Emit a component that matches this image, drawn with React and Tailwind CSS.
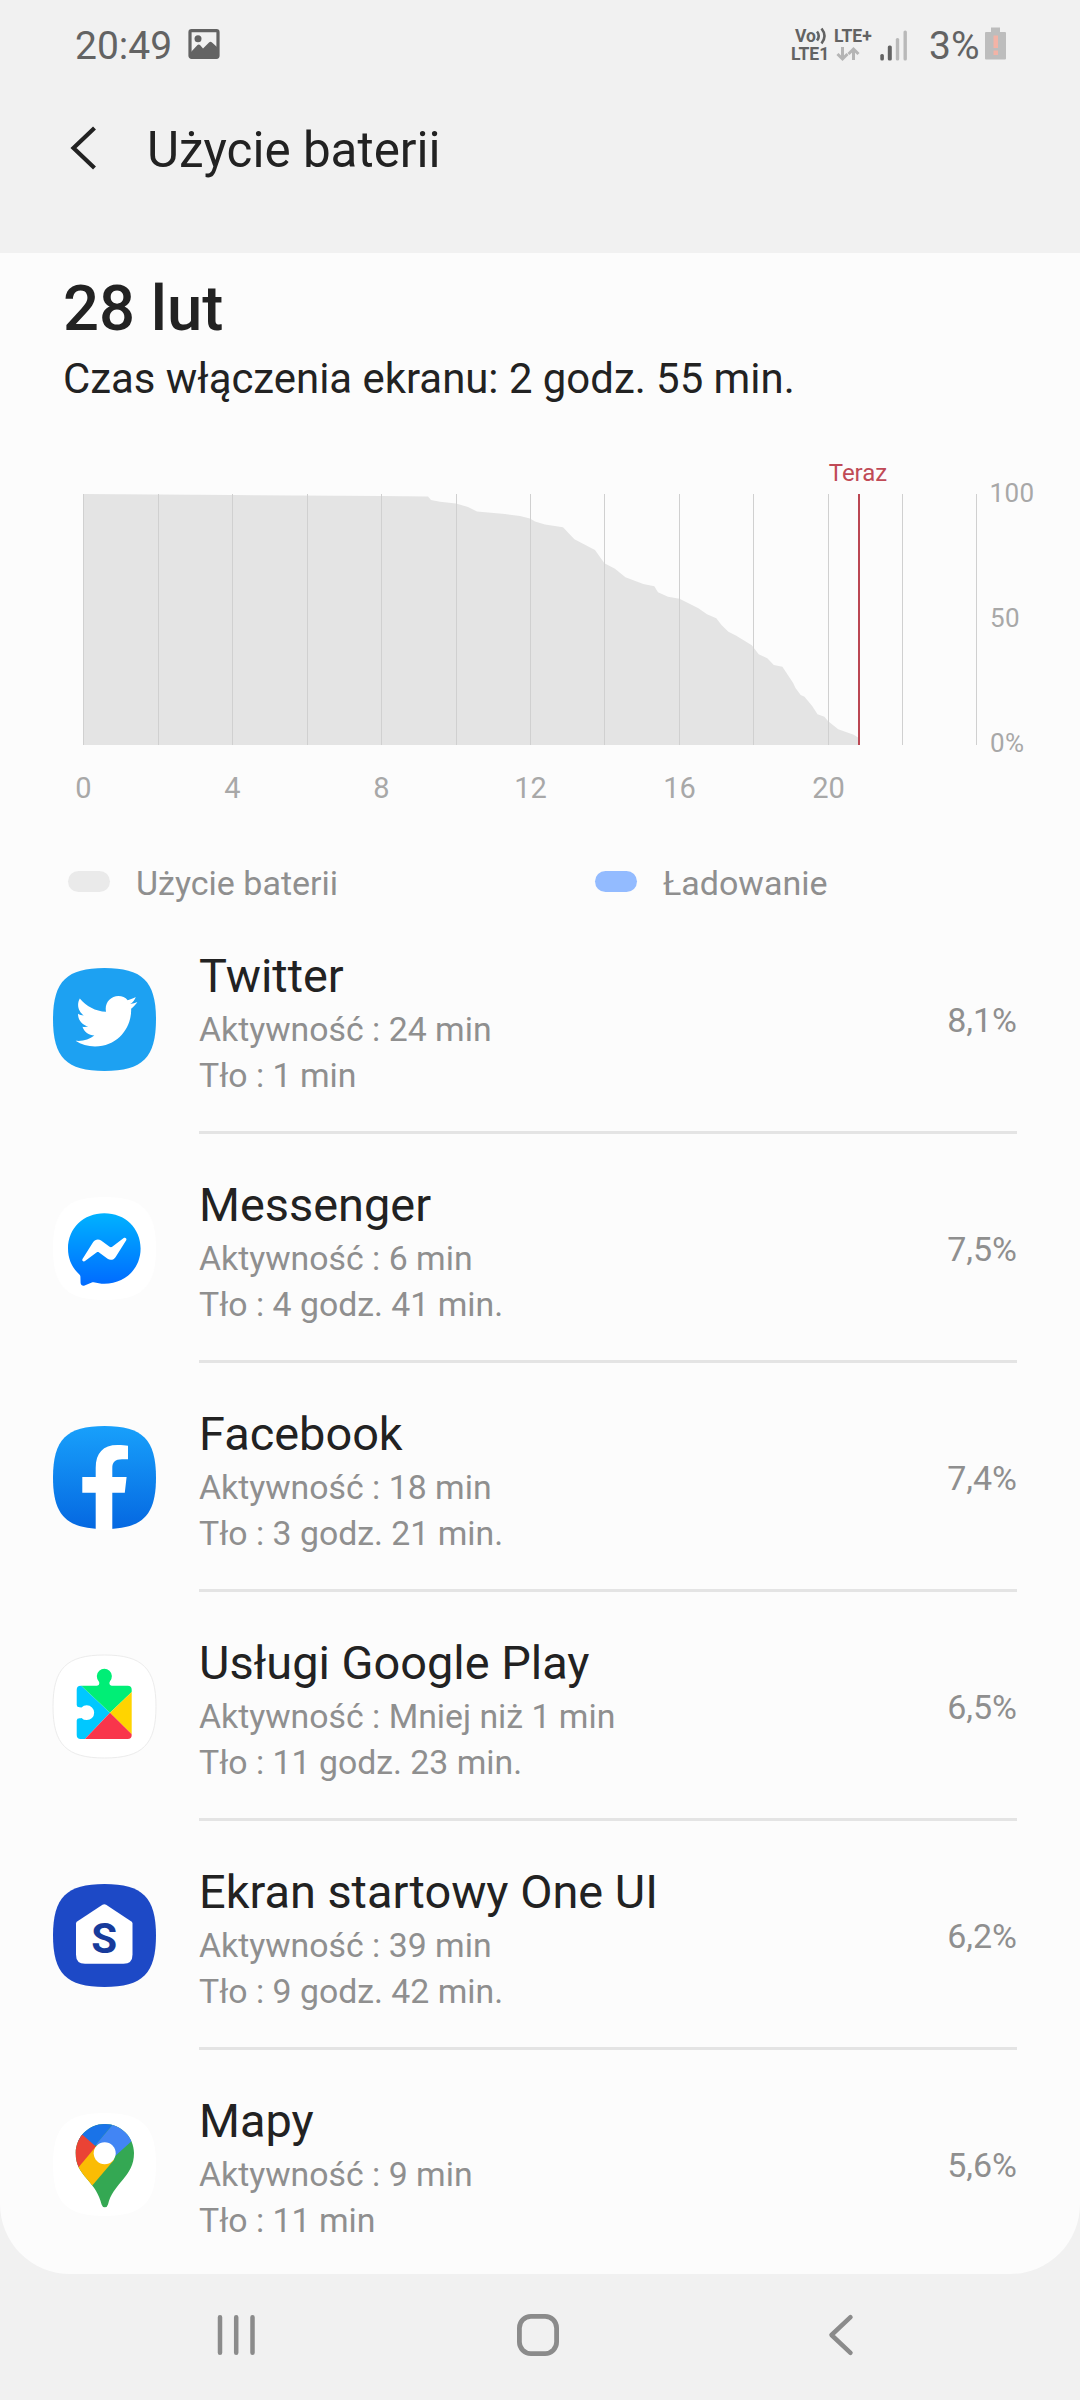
import { FaTwitter } from "react-icons/fa";

const SQUIRCLE = "M51.5 0C89.5 0 103 13.5 103 51.5S89.5 103 51.5 103 0 89.5 0 51.5 13.5 0 51.5 0Z";

function AppIcon({ fill, stroke, children }) {
    return (
        <svg className="w-[103px] h-[103px] overflow-visible" viewBox="0 0 103 103">
            <path d={SQUIRCLE} fill={fill} stroke={stroke} />
            {children}
        </svg>
    );
}

function TwitterIcon() {
    return (
        <AppIcon fill="#1da1f2">
            <FaTwitter x="22.5" y="22.3" size={62} color="#fff" />
        </AppIcon>
    );
}

function MessengerIcon() {
    return (
        <AppIcon fill="#fff">
            <defs>
                <linearGradient id="msg" x1="0" y1="0" x2="0" y2="1">
                    <stop offset="0" stopColor="#00b2ff" />
                    <stop offset="1" stopColor="#006aff" />
                </linearGradient>
            </defs>
            <path
                d="M51.3 16.3C30.5 16.3 15 31.3 15 51.5C15 62 19.3 71.2 26.4 77.5C27 78.1 27.4 78.8 27.4 79.6L27.6 86.1C27.7 88.1 29.7 89.4 31.6 88.6L38.8 85.4C39.4 85.1 40.1 85.1 40.7 85.2C44 86.1 47.6 86.7 51.3 86.7C72.2 86.7 87.6 71.6 87.6 51.5S72.2 16.3 51.3 16.3Z"
                fill="url(#msg)"
            />
            <path
                d="M29.5 61.9L40.2 45C41.9 42.3 45.5 41.6 48.1 43.5L56.6 49.8C57.4 50.4 58.5 50.4 59.2 49.8L70.7 41.1C72.2 39.9 74.2 41.7 73.2 43.3L62.5 60.2C60.8 62.9 57.2 63.6 54.6 61.7L46.1 55.4C45.3 54.8 44.3 54.8 43.5 55.4L32 64.1C30.5 65.3 28.5 63.5 29.5 61.9Z"
                fill="#fff"
            />
        </AppIcon>
    );
}

function FacebookIcon() {
    return (
        <AppIcon fill="url(#fb)">
            <defs>
                <linearGradient id="fb" x1="0" y1="0" x2="0" y2="1">
                    <stop offset="0" stopColor="#18a0fb" />
                    <stop offset="1" stopColor="#0568e1" />
                </linearGradient>
            </defs>
            <path
                d="M42.7 104V66.7H29.3V51H42.7V42C42.7 27 50 19 64.5 19C69 19 72.5 19.2 75 19.7V33.2H69C62 33.2 59.3 36.5 59.3 42V51H73.6L71.8 66.7H59.3V104Z"
                fill="#fff"
            />
        </AppIcon>
    );
}

function PlayServicesIcon() {
    return (
        <AppIcon fill="#fff" stroke="#ececec">
            <defs>
                <clipPath id="puzzle">
                    <path d="M27.7 30.7H44Q46.5 30.5 46.3 28Q46.2 27 45.5 26A7.5 7.5 0 1 1 57.2 26Q56.5 27 56.4 28Q56.2 30.5 58.7 30.7H74.7Q78.7 30.7 78.7 34.7V80Q78.7 84 74.7 84H27.7Q23.7 84 23.7 80V65.5Q23.8 63.3 26.5 63.2Q28 63.2 28.5 62.9A7.4 7.4 0 1 0 28.5 52.5Q28 52.3 26.5 52.3Q23.8 52.2 23.7 50V34.7Q23.7 30.7 27.7 30.7Z" />
                </clipPath>
            </defs>
            <g clipPath="url(#puzzle)">
                <path d="M20 23L57 57.7L30 86H20Z" fill="#00c8ff" />
                <path d="M28 30.5V10H80V35.7L57 57.7Z" fill="#00ee76" />
                <path d="M80 35.7V80.5L57 57.7Z" fill="#ffd400" />
                <path d="M57 57.7L80 80.5V86H30Z" fill="#f9354b" />
            </g>
        </AppIcon>
    );
}

function OneUiIcon() {
    return (
        <AppIcon fill="#1d49c6">
            <path
                d="M49.5 20.8Q51.3 19.7 53.1 20.8L78 37.2Q79.5 38.2 79.5 39.5V70.7Q79.5 79.7 70.5 79.7H32Q23 79.7 23 70.7V39.5Q23 38.2 24.5 37.2Z"
                fill="#fff"
            />
            <text x="51.3" y="68.8" textAnchor="middle" fontSize="42" fontWeight="700" fill="#173b9b">S</text>
        </AppIcon>
    );
}

function MapsIcon() {
    return (
        <AppIcon fill="#fff">
            <defs>
                <clipPath id="pin">
                    <path d="M51.8 11C68 11 81 24 81 40C81 52 76 59 70 66.5C63 75 57.5 81 55 91.5Q54.2 94.3 51.8 94.3T48.6 91.5C46 81 41 74 34 66C27 57.5 22.7 52 22.7 40C22.7 24 35.6 11 51.8 11Z" />
                </clipPath>
            </defs>
            <g clipPath="url(#pin)">
                <path d="M0 0H103V103H0Z" fill="#34a853" />
                <path d="M25 5H65L36 40L25 30Z" fill="#1a73e8" />
                <path d="M61.5 9.5L90 0V18L60 45L43 31.5Z" fill="#4285f4" />
                <path d="M15 10L30.3 22.5L44 34.5L26 55.5H10Z" fill="#ea4335" />
                <path d="M42.5 34L52 40L61 47L38 74L20 61Z" fill="#fbbc04" />
            </g>
            <circle cx="51.7" cy="40.3" r="11" fill="#fff" />
        </AppIcon>
    );
}

const apps = [
    { name: "Twitter", active: "24 min", background: "1 min", percent: "8,1%", Icon: TwitterIcon },
    { name: "Messenger", active: "6 min", background: "4 godz. 41 min.", percent: "7,5%", Icon: MessengerIcon },
    { name: "Facebook", active: "18 min", background: "3 godz. 21 min.", percent: "7,4%", Icon: FacebookIcon },
    { name: "Usługi Google Play", active: "Mniej niż 1 min", background: "11 godz. 23 min.", percent: "6,5%", Icon: PlayServicesIcon },
    { name: "Ekran startowy One UI", active: "39 min", background: "9 godz. 42 min.", percent: "6,2%", Icon: OneUiIcon },
    { name: "Mapy", active: "9 min", background: "11 min", percent: "5,6%", Icon: MapsIcon },
];

function StatusBar() {
    return (
        <div className="h-[92px] flex items-center pl-[75px] pr-[74px] text-[#636363]">
            <span className="w-[113px] text-[39px] leading-[46px]">20:49</span>
            <svg className="w-[32px] h-[30px] -mt-[4px]" viewBox="0 0 32 30">
                <rect x="2" y="1.7" width="28" height="26.6" rx="1.5" fill="none" stroke="#636363" strokeWidth="3.2" />
                <circle cx="10" cy="9.8" r="3.5" fill="#636363" />
                <path d="M3 23L9.5 16Q11 15 12.5 16.5L15 19.5L21 13.5Q22.5 12 24 13.5L29 18V28H3Z" fill="#636363" />
            </svg>

            <div className="ml-auto flex items-center">
                <div className="w-[89px] -mt-[2px] text-[17.5px] leading-[18px] font-bold">
                    <div className="flex items-center pl-[4px]">
                        <span>Vo</span>
                        <svg className="w-[12px] h-[18px]" viewBox="0 0 12 18" fill="none" stroke="#636363" strokeWidth="2.6">
                            <path d="M1 4.5Q4.5 9 1 13.5M5.5 1.5Q11.5 9 5.5 16.5" />
                        </svg>
                        <span className="ml-[6px]">LTE+</span>
                    </div>
                    <div className="flex items-center">
                        <span>LTE1</span>
                        <svg className="ml-[7px] w-[24px] h-[16px]" viewBox="0 0 24 16" fill="none" stroke="#b5b5b5" strokeWidth="3">
                            <path d="M6.5 1V13M1.5 8L6.5 13L11.5 8M17.5 14V3M12.5 8L17.5 3L22.5 8" />
                        </svg>
                    </div>
                </div>
                <svg className="w-[28px] h-[31px] -mt-[2px]" viewBox="0 0 28 31">
                    <rect x="0.3" y="24" width="3.6" height="6.5" rx="1.6" fill="#636363" />
                    <rect x="7.8" y="15.5" width="4" height="15" rx="1.6" fill="#636363" />
                    <rect x="15.8" y="8" width="3.4" height="22.5" rx="1.6" fill="#b9b9b9" />
                    <rect x="23.5" y="0.5" width="3.4" height="30" rx="1.6" fill="#b9b9b9" />
                </svg>
                <span className="ml-[21px] w-[56px] text-[39px] leading-[46px]">3%</span>
                <svg className="w-[21px] h-[33px] -mt-[5px]" viewBox="0 0 21 33">
                    <path d="M6 0.5H15V5H20Q21 5 21 6V31.5Q21 32.5 20 32.5H1Q0 32.5 0 31.5V6Q0 5 1 5H6Z" fill="#bdbdbd" />
                    <path d="M8.5 8.5H13V21H8.5ZM8.5 23.5H13V28H8.5Z" fill="#f3b3a6" />
                </svg>
            </div>
        </div>
    );
}

const level = [
    [83, 494], [232, 495], [381, 496], [428, 496.5], [431, 500], [440, 501.8], [456, 503.5], [468, 507], [477, 511.5],
    [505, 514], [520, 516], [530, 518.5], [535, 521.5], [545, 524.5], [563, 527.3], [574.4, 539.3], [595, 550],
    [604.4, 563.3], [615, 568.7], [625.4, 577.3], [643.3, 584], [654.3, 586.3], [658, 592.3], [668, 596.7],
    [679.5, 598.7], [698.4, 608.3], [707, 614.3], [716.3, 618.3], [721.5, 625], [728.4, 631.7], [736.3, 635.7],
    [751.8, 645.3], [758.7, 654.3], [767.3, 658.3], [773.8, 665], [782.4, 666.7], [793, 682.7], [795.5, 688],
    [800.7, 695], [804.5, 696.7], [812, 705.7], [817.5, 714.3], [824.4, 716.7], [828.2, 721.3], [838.2, 729.3],
    [853.7, 734.7], [858.9, 738],
];
const gridX = [83, 158, 232, 307, 381, 456, 530, 604, 679, 753, 828, 902, 976];

function BatteryChart() {
    return (
        <svg className="block shrink-0 w-full h-[457px]" viewBox="0 404 1080 457">
            <path d={`M83 745L${level.map((p) => p.join(" ")).join("L")}V745Z`} fill="#e4e4e4" />
            {gridX.map((x) => (
                <rect key={x} x={x} y="494" width="1" height="251" fill="#d0d0d0" />
            ))}
            <rect x="858" y="494" width="2" height="251" fill="#bb4753" />
            <text x="858" y="481" textAnchor="middle" fontSize="24" fill="#c04a56">Teraz</text>
            <g fontSize="26" fill="#a8a8a8" letterSpacing="0.4">
                <text x="989.5" y="501.5">100</text>
                <text x="990" y="626.5">50</text>
                <text x="990" y="751.5">0%</text>
            </g>
            <g fontSize="29" fill="#a8a8a8" textAnchor="middle">
                {[0, 4, 8, 12, 16, 20].map((h) => (
                    <text key={h} x={gridX[h / 2] + 0.5} y="798">{h}</text>
                ))}
            </g>
        </svg>
    );
}

function AppRow({ app, last }) {
    const { Icon } = app;
    return (
        <div className="h-[229px] shrink-0 flex pl-[53px] pr-[63px]">
            <div className="w-[146px] pt-[63px]">
                <Icon />
            </div>
            <div className={`flex-1 flex justify-between pt-[42px] ${last ? "" : "border-b-[3px] border-[#e4e4e4]"}`}>
                <div>
                    <div className="mb-[3px] text-[46.9px] leading-[57px] text-[#222222]">{app.name}</div>
                    <div className="text-[33.8px] leading-[46px] text-[#8f8f8f]">
                        <p>Aktywność : {app.active}</p>
                        <p>Tło : {app.background}</p>
                    </div>
                </div>
                <span className="pt-[50px] text-[34px] leading-[46px] text-[#8f8f8f]">{app.percent}</span>
            </div>
        </div>
    );
}

export default function App() {
    return (
        <div className="w-[1080px] h-[2400px] flex flex-col overflow-hidden bg-[#f1f1f1] font-['Roboto',sans-serif]">
            <StatusBar />

            <header className="h-[161px] flex items-start pl-[70px] pt-[28px]">
                <svg className="w-[30px] h-[56px]" viewBox="0 0 30 56">
                    <path d="M24.5 8L3.5 28L24.5 48" fill="none" stroke="#222" strokeWidth="4.2" />
                </svg>
                <h1 className="ml-[47px] text-[49.4px] leading-[60px] text-[#222222]">Użycie baterii</h1>
            </header>

            <main className="h-[2021px] flex flex-col overflow-hidden rounded-b-[70px] bg-[#fcfcfc]">
                <div className="shrink-0 px-[63px] pt-[18px] h-[151px] text-[#222222]">
                    <h2 className="text-[63.4px] leading-[75px] font-medium">28 lut</h2>
                    <p className="mt-[8px] text-[41.9px] leading-[50px]">Czas włączenia ekranu: 2 godz. 55 min.</p>
                </div>

                <BatteryChart />

                <div className="shrink-0 h-[44px] grid grid-cols-[527px_1fr] pl-[68px] text-[34px] leading-[44px] text-[#8f8f8f]">
                    <div className="flex items-center">
                        <i className="w-[42px] h-[21px] -mt-[3px] mr-[26px] rounded-full bg-[#eaeaea]" />
                        Użycie baterii
                    </div>
                    <div className="flex items-center">
                        <i className="w-[42px] h-[21px] -mt-[3px] mr-[26px] rounded-full bg-[#93bbff]" />
                        Ładowanie
                    </div>
                </div>

                {apps.map((app, i) => (
                    <AppRow key={app.name} app={app} last={i === apps.length - 1} />
                ))}
            </main>

            {/* Navigation bar */}
            <nav className="h-[122px] flex items-center px-[217px]">
                <svg className="w-[39px] h-[42px]" viewBox="0 0 39 42" stroke="#8b8b8b" strokeWidth="4.5" strokeLinecap="round">
                    <path d="M3 3.2V38.8M19.2 3.2V38.8M35.5 3.2V38.8" />
                </svg>
                <svg className="ml-[261px] w-[42px] h-[42px]" viewBox="0 0 42 42">
                    <rect x="2.4" y="2.4" width="37.2" height="37.2" rx="11.5" fill="none" stroke="#8b8b8b" strokeWidth="4.8" />
                </svg>
                <svg className="ml-[269px] w-[26px] h-[42px]" viewBox="0 0 26 42" fill="none" stroke="#8b8b8b" strokeWidth="4.5" strokeLinecap="round" strokeLinejoin="round">
                    <path d="M22.5 3.2L3.5 21L22.5 38.8" />
                </svg>
            </nav>
        </div>
    );
}
